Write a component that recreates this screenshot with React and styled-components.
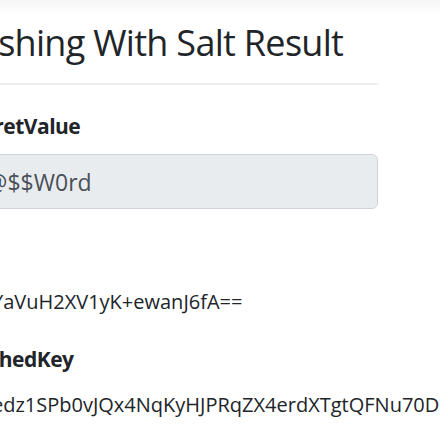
import React from "react";
import styled, { createGlobalStyle } from "styled-components";

const GlobalStyle = createGlobalStyle`
  html, body {
    margin: 0;
    padding: 0;
    background: #fff;
    overflow: hidden;
  }
  body {
    font-family: "Open Sans", "Noto Sans", sans-serif;
    color: #212529;
  }
`;

// the page is scrolled sideways in the shot, so the column starts left of the window
function App() {
  return (
    <>
      <GlobalStyle />
      <TopShade />
      <Page>
        <Title>Hashing With Salt Result</Title>
        <Rule />
        <Label $top={29}>SecretValue</Label>
        <ReadOnlyInput value="P@$$W0rd" readOnly />
        <Label $top={34}>Salt</Label>
        <Value>YaVuH2XV1yK+ewanJ6fA==</Value>
        <Label $top={30}>HashedKey</Label>
        <Value>edz1SPb0vJQx4NqKyHJPRqZX4erdXTgtQFNu70DIYk8=</Value>
      </Page>
    </>
  );
}

const TopShade = styled.div`
  height: 14px;
  background: linear-gradient(#f5f5f5, #ffffff);
`;

const Page = styled.main`
  display: flex;
  flex-direction: column;
  width: 425px;
  margin-left: -47px;
`;

const Title = styled.h1`
  margin: 7px 0 0;
  font-size: 36px;
  font-weight: 500;
  line-height: 1.2;
  letter-spacing: -0.7px;
  white-space: nowrap;
`;

const Rule = styled.hr`
  width: 100%;
  margin: 19px 0 0;
  border: 0;
  border-top: 2px solid #efefef;
`;

const Label = styled.h5`
  margin: ${(p) => p.$top}px 0 0 8px;
  font-size: 21px;
  font-weight: 700;
  line-height: 1.2;
  letter-spacing: -0.5px;
  white-space: nowrap;
`;

const ReadOnlyInput = styled.input`
  margin-top: 15px;
  height: 55px;
  box-sizing: border-box;
  padding: 0 19px;
  border: 1px solid #ced4da;
  border-radius: 6px;
  background: #e9ecef;
  color: #495057;
  font-family: inherit;
  font-size: 23px;
  outline: none;
`;

const Value = styled.p`
  margin: 18px 0 0 39px;
  font-size: 20px;
  line-height: 1.5;
  white-space: nowrap;
`;

export default App;
